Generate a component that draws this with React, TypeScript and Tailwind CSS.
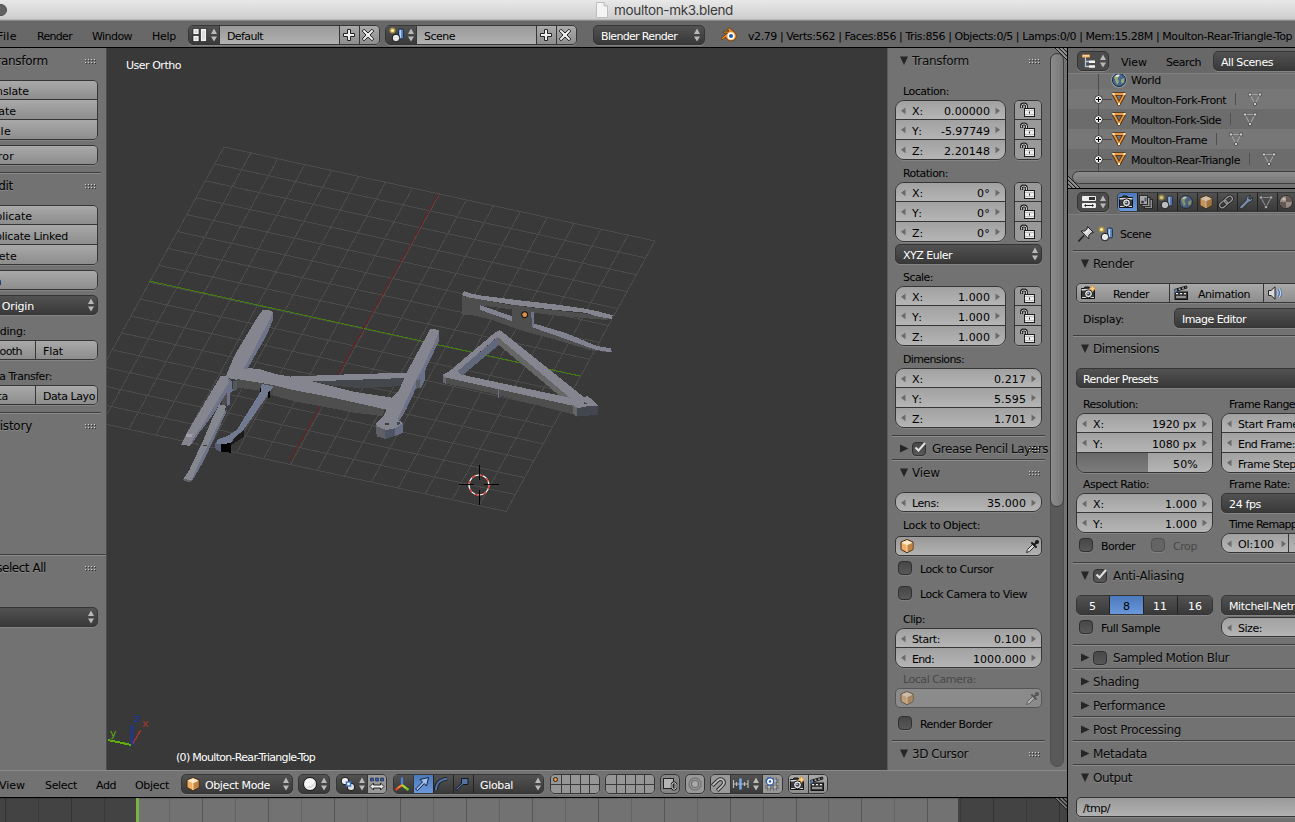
import React, { useLayoutEffect, useRef } from "react";

/* ---------- text ---------- */

// A label whose tracking is fitted so that it takes w pixels.
function T({ children, w, big, className = "" }: { children: string; w?: number; big?: boolean; className?: string }) {
  const ref = useRef<HTMLSpanElement>(null);
  useLayoutEffect(() => {
    const el = ref.current;
    if (!el || !w) return;
    el.style.letterSpacing = "0px";
    const natural = el.getBoundingClientRect().width;
    el.style.letterSpacing = (w - natural) / children.length + "px";
  }, [w, children]);
  return (
    <span ref={ref} className={"inline-block shrink-0 whitespace-pre leading-[14px] " + (big ? "" : "mt-[2px] ") + className}>
      {children}
    </span>
  );
}

/* ---------- shared looks ---------- */

const btn = "bg-linear-to-b from-[#a9a9a9] to-[#8d8d8d]";
const num = "bg-linear-to-b from-[#a1a1a1] to-[#b5b5b5]";
const menu = "bg-linear-to-b from-[#525252] to-[#393939] text-white";
const field = "bg-linear-to-b from-[#999] to-[#b2b2b2]";
const edge = "border border-[#363636] shadow-[0_1px_0_#848484]";

function Svg({ children, w = 16, h = 16, className = "" }: { children: React.ReactNode; w?: number; h?: number; className?: string }) {
  return (
    <svg width={w} height={h} viewBox={`0 0 ${w} ${h}`} className={"shrink-0 " + className}>
      {children}
    </svg>
  );
}

const UpDown = ({ className = "" }: { className?: string }) => (
  <Svg w={6} h={14} className={className}>
    <path d="M3 0.5 L6 6 H0Z M3 13.5 L6 8.5 H0Z" fill="#b9b9b9" />
  </Svg>
);
const Left = () => (
  <Svg w={5} h={8}>
    <path d="M0 3.8 L4.500 0.500 V7.200Z" fill="#6a6a6a" />
  </Svg>
);
const Right = () => (
  <Svg w={5} h={8}>
    <path d="M5 3.8 L0.500 0.500 V7.200Z" fill="#6a6a6a" />
  </Svg>
);

const Grip = ({ className = "" }: { className?: string }) => (
  <Svg w={12} h={6} className={className}>
    {[0, 3, 6, 9].map((x) => (
      <g key={x}>
        <path d={`M${x} 0h1v1h-1z M${x} 3h1v1h-1z`} fill="#d0d0d0" />
        <path d={`M${x + 1} 1h1v1h-1z M${x + 1} 4h1v1h-1z`} fill="#333" />
      </g>
    ))}
  </Svg>
);

const Sep = ({ className = "" }: { className?: string }) => (
  <div className={"h-[2px] shrink-0 border-b border-[#8b8b8b] bg-[#3e3e3e] " + className} />
);

function Check({ on, dim }: { on?: boolean; dim?: boolean }) {
  return (
    <div
      className={
        "relative h-[14px] w-[14px] shrink-0 rounded-[4px] border shadow-[0_1px_0_#808080] " +
        (dim ? "border-[#505050] bg-[#646464]" : "border-[#303030] bg-linear-to-b from-[#474747] to-[#585858]")
      }
    >
      {on && (
        <svg width="16" height="14" viewBox="0 0 16 14" className="absolute -top-[3px] -left-px">
          <path d="M3.5 7.5 L6.5 10.5 L13 3" fill="none" stroke="#e4e4e4" strokeWidth="2" />
        </svg>
      )}
    </div>
  );
}

function Head({ title, w, open = true, check, grip }: { title: string; w: number; open?: boolean; check?: "on" | "off"; grip?: string }) {
  return (
    <div className={"relative flex shrink-0 items-center text-[12px] text-[#080808] [text-shadow:0_1px_0_#8a8a8a] " + (open ? "h-6" : "h-[22px] pt-px")}>
      <Svg w={10} h={10} className="mr-[2px]">
        {open ? <path d="M0 0.5 H8 L4 9Z" fill="#262626" /> : <path d="M0 0.5 V8.5 L8.5 4.5Z" fill="#262626" />}
      </Svg>
      {check && (
        <div className="mr-[6px]">
          <Check on={check === "on"} />
        </div>
      )}
      <T big w={w}>{title}</T>
      {grip && <Grip className={"absolute top-[10px] " + grip} />}
    </div>
  );
}

function Num({ label, lw, value, vw, first, tight }: { label: string; lw: number; value?: string; vw?: number; first?: boolean; tight?: boolean }) {
  return (
    <div className={"flex flex-auto items-center pr-[5px] pl-[5px] " + num + (first ? " h-[18px] pt-px" : " h-5 border-t border-[#363636]")}>
      <Left />
      <T w={lw} className={"ml-[6px] " + (first ? "" : "pt-[2px]")}>{label}</T>
      <div className="flex-1" />
      {value && <T w={vw} className={(tight ? "mr-[5px] " : "mr-[6px] ") + (first ? "" : "pt-[2px]")}>{value}</T>}
      {value && <Right />}
    </div>
  );
}

const Label = ({ children, w, className = "" }: { children: string; w: number; className?: string }) => (
  <div className={"flex h-[18px] shrink-0 items-center " + className}>
    <T w={w}>{children}</T>
  </div>
);

/* ---------- icons ---------- */

const Plus = () => (
  <Svg w={14} h={14}>
    <path d="M5.5 1.5h3v4h4v3h-4v4h-3v-4h-4v-3h4z" fill="#eee" stroke="#222" />
  </Svg>
);
const Cross = () => (
  <Svg w={14} h={14}>
    <path d="M3 1.2 L7 5 L11 1.2 L12.8 3 L9 7 L12.8 11 L11 12.8 L7 9 L3 12.8 L1.2 11 L5 7 L1.2 3Z" fill="#eee" stroke="#222" />
  </Svg>
);
const SceneIcon = () => (
  <Svg>
    <rect x="9.5" y="2" width="5" height="10" rx="1.5" fill="#5583c4" stroke="#16233c" strokeWidth=".8" />
    <path d="M10.5 3h1.6v8h-1.6z" fill="#bcd6fa" />
    <circle cx="3.500" cy="3.5" r="3" fill="#ac9142" />
    <circle cx="3.500" cy="3.5" r="1.6" fill="#fff2a0" />
    <circle cx="7" cy="11" r="3.8" fill="#e9e9e9" stroke="#111" />
    <path d="M4 13a3.8 3.8 0 0 0 6.5-3.5 4 4 0 0 1-6.500 3.500z" fill="#888" />
  </Svg>
);
const Cube = ({ dim }: { dim?: boolean }) => (
  <Svg className={dim ? "opacity-55" : ""}>
    <path d="M8 1.500 L14 4 V11.500 L8 14.700 L2 11.500 V4Z" fill="#eeb068" stroke="#4a2a08" />
    <path d="M8 2.200 L13 4.300 L8 6.700 L3 4.300Z" fill="#fbe8cb" />
    <path d="M8 7 L13.400 4.700 V11.200 L8 14Z" fill="#c08340" />
    <path d="M8 6.500 V14 M3 4.500 L8 6.700 L13 4.500" fill="none" stroke="#fff1da" strokeWidth=".8" />
  </Svg>
);
const Globe = () => (
  <Svg>
    <circle cx="8" cy="8" r="6.500" fill="#47688f" stroke="#1b2532" />
    <path d="M3 5 Q6 1.500 9 3.500 L6.500 7 L8 9.500 L6 13 L4.500 9Z M10 7.500 L13.500 6 L13 10.500 L10.500 11.500Z" fill="#9aa878" />
    <path d="M4 4.500 Q6.500 1.500 9 3 L6 5Z" fill="#e6edf3" />
  </Svg>
);
const Eyedrop = ({ dim }: { dim?: boolean }) => (
  <Svg w={15} h={15} className={dim ? "opacity-45" : ""}>
    <path d="M1.500 13.500 L2.500 10.500 L8 5 L10 7 L4.500 12.500Z" fill="#d9d9d9" stroke="#222" strokeWidth=".9" />
    <path d="M7 4 L11 8 M9 6 L12.500 2.500" stroke="#1a1a1a" strokeWidth="2" strokeLinecap="round" />
    <circle cx="12" cy="3" r="2" fill="#1a1a1a" />
  </Svg>
);
const Unlock = () => (
  <Svg w={16} h={16}>
    <path d="M1.500 6 V3.500 Q1.500 2 3.500 2 H4.500 Q6.500 2 6.500 4 V7" fill="none" stroke="#1d1d1d" strokeWidth="2.800" />
    <path d="M1.500 5.500 V3.700 Q1.500 2.200 3.500 2.200 H4.500 Q6.500 2.200 6.500 4 V7" fill="none" stroke="#ccc" strokeWidth="1" />
    <rect x="4.500" y="6.500" width="10" height="8" fill="#ececec" stroke="#1d1d1d" />
    <path d="M5 8.500h9M5 12.500h9" stroke="#c0c0c0" />
    <path d="M9 9.500h1v2h-1z" fill="#222" />
  </Svg>
);
const MeshTri = () => (
  <Svg>
    <path d="M2.500 3 H13.500 L8 13Z" fill="none" stroke="#51300b" strokeWidth="3.600" strokeLinejoin="round" />
    <path d="M2.500 3 H13.500 L8 13Z" fill="none" stroke="#ee9a45" strokeWidth="1.800" />
    <path d="M1.500 2h2v2h-2z M12.500 2h2v2h-2z M7 12h2v2h-2z" fill="#fff0dc" />
  </Svg>
);
const MeshGrey = () => (
  <Svg>
    <path d="M3 3.500 H13 L8 13Z" fill="none" stroke="#a0a0a0" strokeWidth="1.100" />
    {[[3, 3.5], [13, 3.5], [8, 13]].map(([x, y]) => (
      <circle key={x} cx={x} cy={y} r="1.700" fill="#d0d0d0" stroke="#3c3c3c" strokeWidth=".8" />
    ))}
  </Svg>
);
const Camera = ({ spark }: { spark?: boolean }) => (
  <Svg>
    <path d="M1.500 3.500 H4 L5 2 H9 L10 3.500 H14.500 V13.500 H1.500Z" fill="#3b3b3b" stroke="#111" />
    <path d="M1.500 4h13v1.500h-13z M2 12h12v1h-12z" fill="#dadada" />
    <circle cx="8.500" cy="8.800" r="4" fill="#e2e2e2" stroke="#111" />
    <circle cx="8.500" cy="8.800" r="2" fill="#3c4654" />
    <circle cx="8" cy="8.200" r=".8" fill="#fff" />
    {spark && <path d="M12.500 0 L13.600 2.500 L16 3.500 L13.600 4.500 L12.500 7 L11.400 4.500 L9 3.500 L11.400 2.500Z" fill="#ffd48a" stroke="#d68b25" strokeWidth=".6" />}
  </Svg>
);
const Clapper = () => (
  <Svg>
    <path d="M1.500 4.500 L13.500 1 L14 3 L2 6.500Z" fill="#eee" stroke="#111" />
    <path d="M4 4 L5.500 5.300 M7.500 3 L9 4.200 M11 2 L12.500 3.200" stroke="#111" strokeWidth="1.500" />
    <rect x="2" y="7" width="12.500" height="7.500" fill="#3a3a3a" stroke="#111" />
    <path d="M3 8h2v1.200h-2z M7 8h2v1.200h-2z M11 8h2v1.200h-2z M3 11.500h10v1h-10z" fill="#e8e8e8" />
    <path d="M1.500 4.500h2v3h-2z" fill="#4e80bd" />
  </Svg>
);
const Speaker = () => (
  <Svg>
    <path d="M1.500 5.500 H4 L8 1.800 V14.200 L4 10.500 H1.500Z" fill="#d8d8d8" stroke="#222" />
    <path d="M10 5.500 Q12 8 10 10.500 M12 3.500 Q15.500 8 12 12.500" fill="none" stroke="#4d688f" strokeWidth="2.600" />
    <path d="M10 5.500 Q12 8 10 10.500 M12 3.500 Q15.500 8 12 12.500" fill="none" stroke="#b5cdf0" strokeWidth="1.400" />
  </Svg>
);
const Layers = () => (
  <Svg>
    <rect x="6.500" y="5.500" width="8" height="9" fill="#aaa" stroke="#222" />
    <rect x="4" y="3.500" width="8" height="9" fill="#bbb" stroke="#222" />
    <rect x="1.500" y="1.500" width="8" height="9" fill="#c8c8c8" stroke="#222" />
    <circle cx="4.500" cy="8" r="1.500" fill="#333" />
    <path d="M6.500 3.500h2v4h-2z" fill="#46648f" />
  </Svg>
);
const Chain = () => (
  <Svg>
    <g fill="none" transform="rotate(-40 8 8)">
      <rect x="0.500" y="5.500" width="8.500" height="5" rx="2.500" stroke="#191919" strokeWidth="3" />
      <rect x="7" y="5.500" width="8.500" height="5" rx="2.500" stroke="#191919" strokeWidth="3" />
      <rect x="0.500" y="5.500" width="8.500" height="5" rx="2.500" stroke="#b5b5b5" strokeWidth="1.300" />
      <rect x="7" y="5.500" width="8.500" height="5" rx="2.500" stroke="#b5b5b5" strokeWidth="1.300" />
    </g>
  </Svg>
);
const Wrench = () => (
  <Svg>
    <path d="M1.500 13 L8 6.500 Q7.500 3 11 1.500 L12.500 1.500 L10.500 4 L12 5.500 L14.500 3.500 Q15 7.500 10.500 8.200 L4 14.800 Q1.500 15.500 1.500 13Z" fill="#8fa9ca" stroke="#1d2530" />
  </Svg>
);
const Material = () => (
  <Svg>
    <circle cx="8" cy="8" r="6.500" fill="#b5a59a" stroke="#222" />
    <path d="M8 1.800 A6.200 6.200 0 0 1 14.200 8 H8Z M8 8 H1.800 A6.200 6.200 0 0 0 8 14.200Z" fill="#70615a" />
    <circle cx="6" cy="5" r="1.600" fill="#ece5e0" />
  </Svg>
);
const Pin = () => (
  <Svg>
    <path d="M0.500 15.500 L6 9.500" stroke="#222" strokeWidth="1.600" />
    <path d="M9.500 0.500 L15.500 6.500 L13 7 L10.800 9.500 L10.800 13 L3 5 L6.500 5 L9 3Z" fill="#d7d7d7" stroke="#222" />
    <path d="M7.500 7 L10.500 4.500" stroke="#fff" />
  </Svg>
);
const Blender = () => (
  <Svg w={18} h={16}>
    <path d="M1 11.500 L7.500 6 H3.500 V4.200 H9 L7.500 2 L9.500 1 L15.500 6 Q18 9.500 15 12.500 Q10.500 15.500 6.500 12 L5.500 10 L3 12.500Z" fill="#e98a23" stroke="#5e3509" strokeWidth=".7" />
    <circle cx="11" cy="9" r="3.700" fill="#fff" />
    <circle cx="11" cy="9" r="2" fill="#235a9c" />
  </Svg>
);
const LayoutIcon = () => (
  <Svg>
    <path d="M1 1.500h6v6h-6z M1 8.500h6v6h-6z M8.500 1.500h6v13h-6z" fill="#f2f2f2" stroke="#111" strokeWidth=".6" />
    <path d="M10 3.500h3v9h-3z M2.500 3h3v3h-3z M2.500 10h3v3h-3z" fill="#dcdcdc" />
  </Svg>
);
const TreeIcon = () => (
  <Svg>
    <path d="M4.500 4 V13.500 H8 M4.500 8.500 H8" fill="none" stroke="#b5c5d5" strokeWidth="1.300" />
    <path d="M1 1.500h8v3h-8z" fill="#e99848" />
    <path d="M2 2.200h6v1.300h-6z" fill="#ffe4c0" />
    <path d="M8 7.500h6v2.500h-6z M8 12.200h6v2.500h-6z" fill="#f2f2f2" />
  </Svg>
);
const PropIcon = () => (
  <Svg>
    <rect x="1" y="2" width="14" height="5" rx="1" fill="#eee" />
    <path d="M8 3h6v3h-6z" fill="#333" />
    <rect x="1" y="9" width="14" height="5" rx="1" fill="#eee" />
    <path d="M3 11.500 L5 10 V13Z M13 11.500 L11 10 V13Z M5 11h6v1h-6z" fill="#222" />
  </Svg>
);

/* ---------- top bars ---------- */

const TitleBar = () => (
  <div className="flex h-5 shrink-0 items-center border-b border-[#b8b8b8] bg-linear-to-b from-[#e8e8e8] to-[#cecece]">
    <div className="-ml-[6px] h-3 w-[13px] rounded-full border border-[#505050] bg-[#626262]" />
    <svg width="12" height="16" viewBox="0 0 12 16" className="ml-[589px]">
      <path d="M.5 .5 H8 L11.500 4 V15.500 H.5Z" fill="#f4f4f4" stroke="#bdbdbd" />
      <path d="M8 .5 V4 H11.500" fill="#ddd" stroke="#bdbdbd" />
    </svg>
    <T big w={119} className="mt-px ml-[6px] font-[Inter,sans-serif] text-[13.500px] text-[#3a3a3a]">moulton-mk3.blend</T>
  </div>
);

function IdBlock({ icon, name, w, className }: { icon: React.ReactNode; name: string; w: number; className: string }) {
  return (
    <div className={"flex h-5 shrink-0 overflow-hidden rounded-[5px] " + edge + " " + className}>
      <div className={"flex w-[30px] shrink-0 items-center gap-[3px] pl-[3px] " + menu}>
        {icon}
        <UpDown />
      </div>
      <div className={"flex w-[120px] shrink-0 items-center border-l border-[#363636] pt-px pl-[7px] " + field}>
        <T w={w}>{name}</T>
      </div>
      <div className={"flex w-[20px] shrink-0 items-center justify-center border-l border-[#363636] pr-[2px] " + btn}><Plus /></div>
      <div className={"flex flex-1 items-center justify-center border-l border-[#363636] pr-[3px] " + btn}><Cross /></div>
    </div>
  );
}

const InfoBar = () => (
  <div className="flex h-7 shrink-0 items-center border-t border-b border-t-[#8a8a8a] border-b-black bg-[#686868]">
    <div className="flex items-center pt-[4px]">
      <T w={20} className="-ml-[3px]">File</T>
      <T w={35} className="ml-[20px]">Render</T>
      <T w={40} className="ml-[20px]">Window</T>
      <T w={24} className="ml-[20px]">Help</T>
    </div>
    <div className="flex items-center pt-[2px]">
      <IdBlock icon={<LayoutIcon />} name="Default" w={36} className="ml-[12px] w-[192px]" />
      <IdBlock icon={<SceneIcon />} name="Scene" w={31} className="ml-[5px] w-[192px]" />
      <div className={"ml-[16px] flex h-5 w-[112px] items-center justify-between rounded-[5px] pr-[4px] pl-[7px] " + menu + " " + edge}>
        <T w={76} className="pt-px">Blender Render</T>
        <UpDown />
      </div>
      <div className="ml-[15px]"><Blender /></div>
      <T w={544} className="ml-[10px] pt-px">v2.79 | Verts:562 | Faces:856 | Tris:856 | Objects:0/5 | Lamps:0/0 | Mem:15.28M | Moulton-Rear-Triangle-Top</T>
    </div>
  </div>
);

/* ---------- tool shelf ---------- */

function ToolGroup({ items, className = "" }: { items: [string, number][]; className?: string }) {
  return (
    <div className={"mr-[8px] -ml-[28px] flex shrink-0 flex-col overflow-hidden rounded-[5px] " + edge + " " + className}>
      {items.map(([t, w], i) => (
        <div key={t} className={"flex items-center pl-[7px] " + btn + (i ? " h-5 border-t border-[#363636]" : " h-[18px] pt-px")}>
          <T w={w} className={i ? "pt-[2px]" : ""}>{t}</T>
        </div>
      ))}
    </div>
  );
}

function ToolPair({ a, aw, b, bw }: { a: string; aw: number; b: string; bw: number }) {
  return (
    <div className={"mr-[8px] -ml-[28px] flex h-5 shrink-0 overflow-hidden rounded-[5px] " + edge}>
      <div className={"flex w-[62px] items-center pt-px pl-[10px] " + btn}><T w={aw}>{a}</T></div>
      <div className={"flex flex-1 items-center border-l border-[#363636] pt-px pl-[7px] " + btn}><T w={bw}>{b}</T></div>
    </div>
  );
}

function ToolHead({ title, w, className = "-ml-[9px]" }: { title: string; w: number; className?: string }) {
  return (
    <div className="relative flex h-6 shrink-0 items-center text-[12px] [text-shadow:0_1px_0_#8a8a8a]">
      <T big w={w} className={className}>{title}</T>
      <Grip className="absolute top-[10px] left-[85px]" />
    </div>
  );
}

const ToolShelf = () => (
  <div className="flex w-[107px] shrink-0 flex-col overflow-hidden border-r border-[#4d4d4d] bg-[#727272]">
    <div className="mt-px"><ToolHead title="Transform" w={57} /></div>
    <ToolGroup className="mt-[7px] h-[60px]" items={[["Translate", 49], ["Rotate", 36], ["Scale", 31]]} />
    <ToolGroup className="mt-[5px] h-5" items={[["Mirror", 34]]} />
    <Sep className="mt-[7px] mr-[5px]" />
    <ToolHead title="Edit" w={22} />
    <ToolGroup className="mt-[7px] h-[60px]" items={[["Duplicate", 52], ["Duplicate Linked", 88], ["Delete", 37]]} />
    <ToolGroup className="mt-[5px] h-5" items={[["Join", 22]]} />
    <div className={"mt-[5px] mr-[8px] -ml-[28px] flex h-5 shrink-0 items-center justify-between rounded-[5px] pr-[3px] pl-[8px] " + menu + " " + edge}>
      <T w={53} className="pt-px">Set Origin</T>
      <UpDown />
    </div>
    <Label w={46} className="mt-[7px] -ml-[20px]">Shading:</Label>
    <ToolPair a="Smooth" aw={39} b="Flat" bw={20} />
    <Label w={71} className="mt-[7px] -ml-[19px]">Data Transfer:</Label>
    <ToolPair a="Data" aw={25} b="Data Layo" bw={52} />
    <Sep className="mt-[7px] mr-[5px]" />
    <ToolHead title="History" w={41} />
    <Sep className="mt-[116px]" />
    <ToolHead title="(De)select All" w={74} className="-ml-[28px]" />
    <div className={"mt-[27px] mr-[8px] -ml-[28px] flex h-5 shrink-0 items-center justify-end rounded-[5px] pr-[3px] " + menu + " " + edge}>
      <UpDown />
    </div>
  </div>
);

/* ---------- 3D viewport ---------- */

const steps = Array.from({ length: 17 }, (_, i) => i);

const FRAME: [string, string][] = [
  ["#44474b", "520,304 792,292 780,318 665,325 577,317"],
  ["#4e4e4e", "288,296 400,316 575,352 735,386 728,408 640,398 575,385 470,365 400,347 360,332 288,322"],
  ["#85858f", "312,262 360,268 410,283 448,289 490,297 640,335 757,353 778,372 740,389 575,352 460,330 400,315 285,296"],
  ["#85858f", "440,290 595,284 802,278 795,294 520,304 485,302"],
  ["#6d7389", "398,97 398,122 380,165 340,235 322,268 300,268 318,240 386,118"],
  ["#85858f", "368,90 396,92 398,99 388,120 345,205 312,265 290,300 256,292 283,228 305,190 350,115"],
  ["#6d7389", "896,152 896,185 855,272 828,325 800,385 780,420 760,420 790,365 828,290 880,185"],
  ["#6a7085", "838,284 855,275 855,300 845,322 834,326"],
  ["#5c5e66", "828,300 840,298 840,322 828,327"],
  ["#5f6066", "708,432 738,448 738,477 710,469"],
  ["#4f5464", "736,448 765,440 765,468 736,477"],
  ["#666c82", "764,440 788,428 788,458 764,469"],
  ["#85858f", "872,145 897,151 888,178 850,260 828,300 800,360 772,418 788,428 780,436 760,446 740,450 712,440 708,430 728,412 740,388 757,353 775,335 790,300 800,278 830,222"],
  ["#3e3e3e", "735,429 747,429 747,435 735,435"],
  ["#3e4452", "772,426 780,426 778,434 771,434"],
  ["#55585f", "280,302 291,305 290,330 279,333"],
  ["#4e4e4e", "246,350 262,335 264,372 246,378"],
  ["#6d7389", "264,290 276,305 278,334 269,340 269,375 262,378 262,335 215,410 175,462 152,496 156,480 245,335"],
  ["#85858f", "243,287 262,290 266,308 240,350 190,432 160,475 150,498 124,494 140,460 205,350"],
  ["#a0a0a6", "140,460 159,462 156,471 137,470"],
  ["#6d7389", "264,384 268,376 225,470 190,545 155,605 156,580 232,420"],
  ["#85878f", "238,373 257,377 256,390 232,440 196,510 165,575 154,604 130,598 148,570 190,480 215,420"],
  ["#5f6168", "130,597 155,601 152,607 132,603"],
  ["#3a3a3a", "176,492 202,497 202,499 176,494"],
  ["#474747", "400,322 397,345 384,348 312,458 310,452 350,390"],
  ["#1d1d1d", "312,450 312,470 273,496 270,486 290,468"],
  ["#000000", "243,492 273,489 273,518 243,516"],
  ["#596075", "225,490 243,492 243,516 227,509"],
  ["#727a92", "365,312 400,319 396,326 340,408 308,453 288,468 272,489 245,493 228,490 232,479 262,468 292,448 318,405 362,335"],
  ["#000000", "385,335 391,331 389,354 384,356"],
  ["#000000", "359,324 363,326 362,338 359,332"],
];

const REAR: [string, string][] = [
  ["#4e4e4e", "127,78 183,88 275,106 400,120 500,132 576,145 560,150 420,138 340,128 275,118 183,106 181,124"],
  ["#4e4e4e", "155,134 181,120 275,152 345,172 440,206 525,238 570,246 520,243 420,213 300,180 200,144"],
  ["#4e4e4e", "127,78 181,88 181,124 210,142 155,134 127,134"],
  ["#4e4e4e", "275,108 341,118 341,180 275,162"],
  ["#80838f", "181,106 275,138 275,153 181,120"],
  ["#80838f", "340,160 440,190 530,228 574,235 575,247 525,239 440,208 340,173"],
  ["#85858f", "125,75 133,64 150,70 185,77 300,91 420,105 495,116 530,123 578,136 576,147 530,139 495,128 400,119 275,104 150,83"],
  ["#6d7389", "333,127 341,127 343,168 337,170"],
  ["#666666", "233,200 233,222 440,395 470,395 480,388"],
  ["#62687c", "235,199 235,226 130,314 100,312 140,280"],
  ["#4e4e4e", "78,318 462,405 460,433 330,400 200,366 78,341"],
  ["#69696c", "69,315 79,318 79,342 70,338"],
  ["#85858f", "238,180 250,188 500,388 490,400 460,392 232,200"],
  ["#85858f", "238,180 243,199 232,201 112,304 125,314 462,386 490,396 462,408 75,322 69,314 90,302 222,190"],
  ["#85858f", "460,389 503,378 533,404 533,410 470,415 459,406"],
  ["#42464f", "470,413 498,412 500,407 533,407 533,434 470,440"],
  ["#666668", "459,405 471,413 471,440 459,431"],
  ["#3e4148", "492,397 501,399 500,402 492,401"],
  ["#6d7389", "233,356 237,357 237,384 233,383"],
];

const Viewport = () => (
  <div className="relative w-[780px] shrink-0 overflow-hidden bg-[#393939]">
    <svg width="780" height="722" viewBox="107 48 780 722" shapeRendering="crispEdges">
      <g stroke="#4b4b4b" strokeWidth="1">
        {steps.map((i) => {
          const t = i / 16;
          return (
            <g key={i}>
              <line x1={224 - 149 * t} y1={147 + 270.5 * t} x2={655 - 149 * t} y2={241 + 270.5 * t} />
              <line x1={224 + 431 * t} y1={147 + 94 * t} x2={75 + 431 * t} y2={417.5 + 94 * t} />
            </g>
          );
        })}
      </g>
      <line x1="149" y1="281" x2="580" y2="376" stroke="#40800f" />
      <line x1="438.500" y1="194" x2="289.500" y2="461" stroke="#6f1f1b" />
      <g transform="translate(140 280) scale(0.33333)">
        {FRAME.map(([c, p], i) => <polygon key={i} fill={c} points={p} />)}
      </g>
      <g transform="translate(420 270) scale(0.33333)">
        {REAR.map(([c, p], i) => <polygon key={i} fill={c} points={p} />)}
      </g>
      <circle cx="524.700" cy="314.700" r="3" fill="#d68f48" stroke="#000" shapeRendering="auto" />
      <g shapeRendering="auto" fill="none" strokeWidth="1.200">
        <circle cx="479" cy="485" r="10" stroke="#fff" />
        <circle cx="479" cy="485" r="10" stroke="#e5331f" strokeDasharray="3.927 3.927" />
      </g>
      <path d="M459 484.500h15 M484 484.500h15 M479.500 465v15 M479.500 490v15" stroke="#000" />
      <path d="M131.500 745 L108 740" stroke="#5fae0c" strokeWidth="2" />
      <path d="M132 745 L140.500 730.500" stroke="#a8332a" strokeWidth="1.500" />
      <path d="M132 745 V725" stroke="#1437b8" strokeWidth="2" />
    </svg>
    <span className="absolute top-[664px] left-[27px] text-[#1437b8]">z</span>
    <span className="absolute top-[669px] left-[35px] text-[#a8332a]">x</span>
    <span className="absolute top-[679px] left-[3px] text-[#5fae0c]">y</span>
    <T w={55} className="absolute top-[9px] left-[19px] text-white">User Ortho</T>
    <T w={139} className="absolute top-[701px] left-[69px] text-white">(0) Moulton-Rear-Triangle-Top</T>
  </div>
);

/* ---------- properties region of the 3D view ---------- */

type V = [string, string, number];

function Vec({ rows, lock }: { rows: V[]; lock?: boolean }) {
  return (
    <div className="ml-[7px] flex h-[60px] shrink-0">
      <div className={"flex flex-col overflow-hidden rounded-[9px] " + edge + (lock ? " w-[111px]" : " w-[147px]")}>
        {rows.map(([l, v, w], i) => (
          <Num key={l} tight label={l} lw={11} value={v} vw={w} first={i === 0} />
        ))}
      </div>
      {lock && (
        <div className={"ml-[8px] flex w-[28px] flex-col overflow-hidden rounded-[5px] " + edge}>
          {rows.map(([l], i) => (
            <div key={l} className={"flex items-center justify-center bg-[#999] " + (i ? "h-5 border-t border-[#363636]" : "h-[18px]")}>
              <Unlock />
            </div>
          ))}
        </div>
      )}
    </div>
  );
}

function CheckRow({ label, w, className = "" }: { label: string; w: number; className?: string }) {
  return (
    <div className={"ml-[10px] flex h-[18px] shrink-0 items-center gap-[8px] " + className}>
      <Check />
      <T w={w} className="pt-[2px]">{label}</T>
    </div>
  );
}

const Corner = ({ className, flip }: { className: string; flip?: boolean }) => (
  <svg width="12" height="12" viewBox="0 0 12 12" className={"absolute " + className}>
    <g transform={flip ? "rotate(180 6 6)" : undefined}>
      <path d="M0 0 L12 12 M4 0 L12 8 M8 0 L12 4" stroke="#1c1c1c" />
      <path d="M1.500 0 L12 10.500 M5.500 0 L12 6.500 M9.500 0 L12 2.500" stroke="#b5b5b5" strokeWidth=".9" />
    </g>
  </svg>
);

const SidePanel = () => (
  <div className="relative flex w-[180px] shrink-0 border-l border-[#5c5c5c] bg-[#727272]">
    <div className="flex w-[162px] flex-col">
      <div className="mt-px ml-[12px]"><Head title="Transform" w={57} grip="left-[129px]" /></div>
      <Label w={46} className="mt-[9px] ml-[15px]">Location:</Label>
      <Vec lock rows={[["X:", "0.00000", 46], ["Y:", "-5.97749", 49], ["Z:", "2.20148", 46]]} />
      <Label w={45} className="mt-1 ml-[15px]">Rotation:</Label>
      <Vec lock rows={[["X:", "0°", 13], ["Y:", "0°", 13], ["Z:", "0°", 13]]} />
      <div className={"mt-[2px] ml-[7px] flex h-5 w-[147px] shrink-0 items-center justify-between rounded-[5px] pr-[3px] pl-[7px] " + menu + " " + edge}>
        <T w={49} className="pt-px">XYZ Euler</T>
        <UpDown />
      </div>
      <Label w={30} className="mt-1 ml-[15px]">Scale:</Label>
      <Vec lock rows={[["X:", "1.000", 32], ["Y:", "1.000", 32], ["Z:", "1.000", 32]]} />
      <Label w={61} className="mt-1 ml-[15px]">Dimensions:</Label>
      <Vec rows={[["X:", "0.217", 32], ["Y:", "5.595", 32], ["Z:", "1.701", 32]]} />
      <Sep className="mt-[7px] ml-1 w-[153px]" />
      <div className="ml-[12px]"><Head open={false} check="on" title="Grease Pencil Layers" w={116} grip="left-[129px]" /></div>
      <Sep className="ml-1 w-[153px]" />
      <div className="ml-[12px]"><Head title="View" w={28} grip="left-[129px]" /></div>
      <div className={"mt-[7px] ml-[7px] flex h-5 w-[147px] shrink-0 overflow-hidden rounded-[9px] " + edge}>
        <Num tight label="Lens:" lw={27} value="35.000" vw={39} first />
      </div>
      <Label w={77} className="mt-1 ml-[15px]">Lock to Object:</Label>
      <div className={"mt-[2px] ml-[7px] flex h-5 w-[147px] shrink-0 items-center justify-between rounded-[5px] pr-[1px] pl-[3px] " + field + " " + edge}>
        <Cube />
        <Eyedrop />
      </div>
      <CheckRow label="Lock to Cursor" w={73} className="mt-[3px]" />
      <CheckRow label="Lock Camera to View" w={107} className="mt-[7px]" />
      <Label w={22} className="mt-[8px] ml-[15px]">Clip:</Label>
      <div className={"ml-[7px] flex h-10 w-[147px] shrink-0 flex-col overflow-hidden rounded-[9px] " + edge}>
        <Num tight label="Start:" lw={28} value="0.100" vw={32} first />
        <Num tight label="End:" lw={22} value="1000.000" vw={53} />
      </div>
      <Label w={73} className="mt-[2px] ml-[15px] text-[#484848]">Local Camera:</Label>
      <div className="ml-[7px] flex h-5 w-[147px] shrink-0 items-center justify-between rounded-[5px] border border-[#555] bg-[#8b8b8b] pr-[1px] pl-[3px]">
        <Cube dim />
        <Eyedrop dim />
      </div>
      <CheckRow label="Render Border" w={72} className="mt-[6px]" />
      <Sep className="mt-[8px] ml-1 w-[153px]" />
      <div className="ml-[12px]"><Head title="3D Cursor" w={56} grip="left-[129px]" /></div>
    </div>
    <div className="mt-[5px] mb-[3px] flex w-[14px] flex-col rounded-[7px] border border-[#505050] bg-[#595959]">
      <div className="-m-px h-[454px] rounded-[7px] border border-[#3d3d3d] bg-linear-to-r from-[#8d8d8d] to-[#777]" />
    </div>
    <Corner className="top-0 -right-0" />
  </div>
);

/* ---------- 3D view header ---------- */

const cell = "flex items-center justify-center ";
const icell = "flex items-center justify-center pr-[3px] ";

function LayerGrid({ active, className }: { active?: boolean; className: string }) {
  return (
    <div className={"grid h-5 w-[50px] shrink-0 grid-cols-5 grid-rows-2 overflow-hidden rounded-[5px] " + edge + " " + className}>
      {steps.slice(0, 10).map((i) => (
        <div key={i} className={(i % 5 ? "border-l " : "") + (i > 4 ? "border-t " : "") + "flex items-center justify-center border-[#3a3a3a] bg-[#969696]"}>
          {active && i === 0 && <div className="h-[5px] w-[5px] rounded-full border border-[#222] bg-[#f09a3c]" />}
        </div>
      ))}
    </div>
  );
}

const ViewHeader = () => (
  <div className="flex h-[27px] shrink-0 items-center border-t border-[#8a8a8a] bg-[#727272]">
    <div className="flex items-center pt-px">
      <T w={26} className="-ml-px">View</T>
      <T w={32} className="ml-[20px]">Select</T>
      <T w={20} className="ml-[19px]">Add</T>
      <T w={34} className="ml-[19px]">Object</T>
    </div>
    <div className={"ml-[12px] flex h-5 w-[112px] items-center rounded-[5px] pr-[3px] pl-[3px] " + menu + " " + edge}>
      <Cube />
      <T w={65} className="mr-auto ml-[4px] pt-px">Object Mode</T>
      <UpDown />
    </div>
    <div className={"ml-[5px] flex h-5 w-[32px] items-center justify-between rounded-[5px] pr-[2px] pl-[3px] " + menu + " " + edge}>
      <Svg><circle cx="8" cy="8" r="6.500" fill="#f6f6f6" stroke="#111" /><path d="M3.500 11 A6 6 0 0 0 13 5 Q11.500 10 3.500 11Z" fill="#dcdcdc" /></Svg>
      <UpDown />
    </div>
    <div className={"ml-[6px] flex h-5 w-[51px] overflow-hidden rounded-[5px] " + edge}>
      <div className={"flex w-[30px] items-center justify-between pr-[2px] pl-[3px] " + menu}>
        <Svg>
          <circle cx="5" cy="5" r="3.800" fill="#eee" stroke="#111" />
          <circle cx="11" cy="11" r="3.800" fill="#ddd" stroke="#111" />
          <rect x="6.500" y="6" width="4" height="4" fill="#fff" stroke="#3b74c4" strokeWidth="1.500" />
        </Svg>
        <UpDown />
      </div>
      <div className={cell + "flex-1 border-l border-[#363636] bg-[#999] pr-px"}>
        <Svg>
          <path d="M1.500 2h3v3h-3z M6.500 2h3v3h-3z M11.500 2h3v3h-3z" fill="#2f5fa8" stroke="#16233c" strokeWidth=".6" />
          <path d="M1 10.500 L4.500 7 V9 H11.500 V7 L15 10.500 L11.500 14 V12 H4.500 V14Z" fill="#eee" stroke="#222" />
        </Svg>
      </div>
    </div>
    <div className={"ml-[6px] flex h-5 w-[151px] overflow-hidden rounded-[5px] " + edge}>
      <div className={icell + "w-[19px] " + menu}>
        <Svg>
          <path d="M8 9 V1.500" stroke="#4b83dc" strokeWidth="2.200" />
          <path d="M8 9 L1.500 14" stroke="#d9402c" strokeWidth="2.400" />
          <path d="M8 9 L14.500 14" stroke="#7ac32a" strokeWidth="2.400" />
          <path d="M3.500 12 L8 9 L12 12" fill="none" stroke="#f2d23c" strokeWidth="1" />
        </Svg>
      </div>
      <div className={icell + "w-[20px] border-l border-[#363636] bg-linear-to-b from-[#4c79bb] to-[#6b98dc]"}>
        <Svg><path d="M1.500 13 L8.500 6 L6 3.500 L14.500 1.500 L12.500 10 L10.200 7.600 L3.500 14.500Z" fill="#a2c0ee" stroke="#12223c" /></Svg>
      </div>
      <div className={icell + "w-[20px] border-l border-[#222] " + menu}>
        <Svg><path d="M2 14 Q2 4 13.500 2.500" fill="none" stroke="#0f1724" strokeWidth="3.600" /><path d="M2 14 Q2 4 13.500 2.500" fill="none" stroke="#56729f" strokeWidth="2" /></Svg>
      </div>
      <div className={icell + "w-[20px] border-l border-[#222] " + menu}>
        <Svg><path d="M1.500 13 L7.500 7.500 V2.500 H14 V8.500 H9 L3 14.500Z" fill="#56729f" stroke="#0f1724" /></Svg>
      </div>
      <div className={"flex flex-1 items-center justify-between border-l border-[#222] pr-[2px] pl-[6px] " + menu}>
        <T w={33} className="pt-px">Global</T>
        <UpDown />
      </div>
    </div>
    <LayerGrid active className="ml-[6px]" />
    <LayerGrid className="ml-[5px]" />
    <div className={cell + "ml-[5px] h-5 w-[20px] rounded-[5px] bg-[#858585] " + edge}>
      <Svg><rect x="1.500" y="2.500" width="10" height="10" fill="#b5b5b5" stroke="#222" /><path d="M10 8 Q12 5 14 8 V12 Q12 15 10 12Z" fill="none" stroke="#222" strokeWidth="2.400" /><path d="M10 8 Q12 5 14 8 V12 Q12 15 10 12Z" fill="none" stroke="#ddd" /></Svg>
    </div>
    <div className={cell + "ml-[5px] h-5 w-[20px] rounded-[5px] bg-[#999] " + edge}>
      <Svg><circle cx="8" cy="8" r="6" fill="none" stroke="#777" strokeWidth="1.500" /><circle cx="8" cy="8" r="3.500" fill="#aaa" stroke="#6c6c6c" strokeWidth="1.200" /></Svg>
    </div>
    <div className={"ml-[5px] flex h-5 w-[73px] overflow-hidden rounded-[5px] " + edge}>
      <div className={icell + "w-[19px] bg-[#999]"}>
        <Svg>
          <g fill="none" transform="rotate(45 8 8)">
            <path d="M4.500 14 V7 Q4.500 2.500 8 2.500 Q11.500 2.500 11.500 7 V14" stroke="#2e2e2e" strokeWidth="3.800" />
            <path d="M4.500 13.500 V7 Q4.500 2.500 8 2.500 Q11.500 2.500 11.500 7 V13.500" stroke="#bdbdbd" strokeWidth="1.800" />
          </g>
        </Svg>
      </div>
      <div className={"flex w-[32px] items-center justify-between border-l border-[#363636] pr-[3px] pl-px " + menu}>
        <Svg w={18} h={16}>
          <path d="M1.500 4v8 M4.500 6v4 M12.500 6v4 M16 4v8 M1.500 8h15" stroke="#b9b9b9" strokeWidth="1.200" />
          <path d="M8.500 2.500v11" stroke="#7fb0f5" strokeWidth="2.400" />
        </Svg>
        <UpDown />
      </div>
      <div className={cell + "flex-1 border-l border-[#363636] bg-[#999] pr-px"}>
        <Svg>
          <path d="M5 1v14 M11 1v14 M1 5h14 M1 11h14" stroke="#222" strokeWidth="2.600" />
          <path d="M5 1v14 M11 1v14 M1 5h14 M1 11h14" stroke="#ddd" strokeWidth="1.200" />
          <circle cx="6" cy="5.500" r="3.600" fill="#fff" stroke="#2a5fae" strokeWidth="1.200" /><circle cx="6" cy="5.500" r="1.300" fill="#2a5fae" />
        </Svg>
      </div>
    </div>
    <div className={"ml-[5px] flex h-5 w-[40px] overflow-hidden rounded-[5px] " + edge}>
      <div className={icell + "w-[19px] " + btn}><Camera spark /></div>
      <div className={icell + "flex-1 border-l border-[#363636] " + btn}><Clapper /></div>
    </div>
  </div>
);

const Timeline = () => (
  <div className="relative flex h-[25px] shrink-0 border-t border-black">
    <svg width="1067" height="24" viewBox="0 0 1067 24" shapeRendering="crispEdges">
      <rect width="1067" height="24" fill="#434343" />
      <rect x="138" width="820" height="24" fill="#727272" />
      {Array.from({ length: 33 }, (_, i) => (
        <rect key={i} x={Math.floor(5.2 + 32.950 * i)} width="1" height="24" fill="#000" opacity={i % 2 ? 0.12 : 0.24} />
      ))}
      <rect width="1067" height="1" fill="#000" opacity="0.15" />
      <rect x="136" width="3" height="24" fill="#77b443" />
    </svg>
    <Corner className="top-0 right-0" />
  </div>
);

/* ---------- right column ---------- */

const Mini = ({ children }: { children: React.ReactNode }) => (
  <div className="flex h-5 w-[32px] shrink-0 items-center justify-between rounded-[5px] border border-[#333] bg-[#4b4b4b] pr-[2px] pl-[3px] shadow-[0_1px_0_#848484]">
    {children}
    <UpDown />
  </div>
);

const TREE: [string, number][] = [
  ["Moulton-Fork-Front", 95],
  ["Moulton-Fork-Side", 90],
  ["Moulton-Frame", 76],
  ["Moulton-Rear-Triangle", 109],
];

const Outliner = () => (
  <div className="relative flex h-[141px] shrink-0 flex-col border-b border-black bg-[#727272]">
    <div className="flex h-[26px] shrink-0 items-center border-b border-[#808080] bg-[#686868] pt-px pl-[9px]">
      <Mini><TreeIcon /></Mini>
      <T w={26} className="ml-[12px] pt-px">View</T>
      <T w={35} className="ml-[19px] pt-px">Search</T>
      <div className={"-mr-2 ml-[12px] flex h-5 flex-1 items-center rounded-l-[5px] pt-px pl-[7px] " + menu + " " + edge}>
        <T w={52}>All Scenes</T>
      </div>
    </div>
    <div className="relative flex h-[97px] shrink-0 flex-col overflow-hidden">
      <div className="absolute top-0 left-[30px] h-full w-px bg-[#4b4b4b]" />
      <div className="-mt-[5px] flex h-5 shrink-0 items-center pt-px pl-[43px]">
        <div className="relative rounded-full bg-[#8d97a8]"><Globe /></div>
        <T w={30} className="ml-[4px] pt-px">World</T>
      </div>
      {TREE.map(([t, w], i) => (
        <div key={t} className={"relative flex h-5 shrink-0 items-center pl-[26px] " + (i % 2 ? "bg-black/5" : "bg-white/4")}>
          <svg width="9" height="9" viewBox="0 0 9 9" className="relative">
            <circle cx="4.500" cy="4.500" r="4" fill="#f0f0f0" stroke="#333" />
            <path d="M2 4.500h5M4.500 2v5" stroke="#000" />
          </svg>
          <div className="h-px w-[9px] bg-[#4b4b4b]" />
          <div className="-ml-px"><MeshTri /></div>
          <T w={w} className="ml-[4px] pt-px">{t}</T>
          <div className="mr-[11px] ml-[9px] h-3 w-px bg-[#4f4f4f]" />
          <MeshGrey />
        </div>
      ))}
    </div>
    <div className="-mr-3 ml-1 h-[13px] rounded-full border border-[#3d3d3d] bg-linear-to-b from-[#8d8d8d] to-[#777]" />
    <Corner flip className="bottom-0 left-0" />
  </div>
);

const TABS = [<Camera />, <Layers />, <SceneIcon />, <Globe />, <Cube />, <Chain />, <Wrench />, <MeshGrey />, <Material />];

const Properties = () => (
  <div className="flex flex-1 flex-col overflow-hidden bg-[#727272]">
    <div className="flex h-[26px] shrink-0 items-center border-b border-[#808080] bg-[#686868] pl-[9px]">
      <Mini><PropIcon /></Mini>
      <div className={"-mr-2 ml-[8px] flex h-5 flex-1 overflow-hidden rounded-l-[5px] " + edge}>
        {TABS.map((t, i) => (
          <div key={i} className={icell + "shrink-0 " + (i ? "w-[20px] border-l border-[#222] " + menu + " *:opacity-75" : "w-[19px] bg-linear-to-b from-[#4c79bb] to-[#6b98dc]")}>
            {t}
          </div>
        ))}
      </div>
    </div>
    <div className="flex h-[35px] shrink-0 items-center pt-[2px] pl-[10px]">
      <Pin />
      <div className="ml-[4px]"><SceneIcon /></div>
      <T w={31} className="ml-[6px] pt-px">Scene</T>
    </div>
    <Sep className="ml-[5px]" />
    <div className="ml-[13px]"><Head title="Render" w={41} /></div>
    <div className={"mt-[7px] -mr-2 ml-[8px] flex h-5 shrink-0 overflow-hidden rounded-l-[5px] " + edge}>
      <div className={"flex w-[92px] items-center pl-[3px] " + btn}><Camera spark /><T w={36} className="ml-[17px] pt-px">Render</T></div>
      <div className={"flex w-[94px] items-center border-l border-[#363636] pl-[3px] " + btn}><Clapper /><T w={52} className="ml-[9px] pt-px">Animation</T></div>
      <div className={"flex flex-1 items-center border-l border-[#363636] pl-[3px] " + btn}><Speaker /></div>
    </div>
    <div className="mt-[5px] flex h-5 shrink-0 items-center pl-[15px]">
      <T w={41} className="pt-px">Display:</T>
      <div className={"-mr-2 ml-[50px] flex h-5 flex-1 items-center rounded-l-[5px] pt-px pl-[7px] " + menu + " " + edge}><T w={64}>Image Editor</T></div>
    </div>
    <Sep className="mt-[7px] ml-[5px]" />
    <div className="ml-[13px]"><Head title="Dimensions" w={66} /></div>
    <div className={"mt-[7px] -mr-2 ml-[8px] flex h-5 shrink-0 items-center rounded-l-[5px] pt-px pl-[6px] " + menu + " " + edge}><T w={75}>Render Presets</T></div>
    <div className="mt-[7px] flex h-[160px] shrink-0 pl-[8px]">
      <div className="flex w-[137px] shrink-0 flex-col">
        <Label w={55} className="ml-[7px]">Resolution:</Label>
        <div className={"flex h-[60px] shrink-0 flex-col overflow-hidden rounded-[9px] " + edge}>
          <Num label="X:" lw={11} value="1920 px" vw={44} first />
          <Num label="Y:" lw={11} value="1080 px" vw={44} />
          <div className="flex h-5 border-t border-[#363636]">
            <div className="w-[71px] bg-linear-to-b from-[#686868] to-[#7c7c7c]" />
            <div className={"flex flex-1 items-center justify-end pr-[14px] " + num}><T w={25} className="pt-[2px]">50%</T></div>
          </div>
        </div>
        <Label w={66} className="mt-[2px] ml-[7px]">Aspect Ratio:</Label>
        <div className={"flex h-10 shrink-0 flex-col overflow-hidden rounded-[9px] " + edge}>
          <Num tight label="X:" lw={11} value="1.000" vw={32} first />
          <Num tight label="Y:" lw={11} value="1.000" vw={32} />
        </div>
        <div className="mt-[3px] ml-[3px] flex h-[18px] shrink-0 items-center">
          <Check />
          <T w={34} className="ml-[8px] pt-px">Border</T>
          <div className="ml-[16px]"><Check dim /></div>
          <T w={24} className="ml-[8px] pt-px text-[#484848]">Crop</T>
        </div>
      </div>
      <div className="-mr-10 ml-[8px] flex w-[120px] shrink-0 flex-col">
        <Label w={69} className="ml-[8px]">Frame Range:</Label>
        <div className={"flex h-[60px] shrink-0 flex-col overflow-hidden rounded-[9px] " + edge}>
          <Num label="Start Frame:" lw={64} first />
          <Num label="End Frame:" lw={57} />
          <Num label="Frame Step:" lw={61} />
        </div>
        <Label w={61} className="mt-[2px] ml-[8px]">Frame Rate:</Label>
        <div className={"flex h-5 shrink-0 items-center rounded-[5px] pt-px pl-[7px] " + menu + " " + edge}><T w={32}>24 fps</T></div>
        <Label w={86} className="mt-[2px] ml-[8px]">Time Remapping:</Label>
        <div className={"flex h-5 shrink-0 overflow-hidden rounded-[9px] " + edge}>
          <div className="flex w-[66px]"><Num label="Ol:100" lw={36} value=" " vw={1} first /></div>
          <div className="flex flex-1 border-l border-[#363636]"><Num label="Ne" lw={12} first /></div>
        </div>
      </div>
    </div>
    <Sep className="mt-[7px] ml-[5px]" />
    <div className="ml-[13px]"><Head check="on" title="Anti-Aliasing" w={71} /></div>
    <div className="mt-[7px] flex h-[42px] shrink-0 pl-[8px]">
      <div className="w-[137px] shrink-0">
        <div className={"flex h-5 overflow-hidden rounded-[5px] " + edge}>
          <div className={cell + "w-[32px] pt-[3px] pr-px " + menu}>5</div>
          <div className={cell + "w-[34px] border-l border-[#222] bg-linear-to-b from-[#4c79bb] to-[#6b98dc] pt-[3px]"}>8</div>
          <div className={cell + "w-[34px] border-l border-[#222] pt-[3px] pr-px " + menu}>11</div>
          <div className={cell + "flex-1 border-l border-[#222] pt-[3px] " + menu}>16</div>
        </div>
        <div className="mt-[3px] ml-[3px] flex h-[18px] items-center gap-[8px]"><Check /><T w={59} className="pt-px">Full Sample</T></div>
      </div>
      <div className="-mr-10 ml-[8px] flex w-[120px] shrink-0 flex-col gap-[2px]">
        <div className={"flex h-5 shrink-0 items-center rounded-[5px] pt-px pl-[7px] " + menu + " " + edge}><T w={90}>Mitchell-Netravali</T></div>
        <div className={"flex h-5 overflow-hidden rounded-[9px] " + edge}><Num label="Size:" lw={24} first /></div>
      </div>
    </div>
    <Sep className="mt-[7px] ml-[5px]" />
    <div className="ml-[13px]"><Head open={false} check="off" title="Sampled Motion Blur" w={116} /></div>
    <Sep className="ml-[5px]" />
    <div className="ml-[13px]"><Head open={false} title="Shading" w={46} /></div>
    <Sep className="ml-[5px]" />
    <div className="ml-[13px]"><Head open={false} title="Performance" w={72} /></div>
    <Sep className="ml-[5px]" />
    <div className="ml-[13px]"><Head open={false} title="Post Processing" w={88} /></div>
    <Sep className="ml-[5px]" />
    <div className="ml-[13px]"><Head open={false} title="Metadata" w={54} /></div>
    <Sep className="ml-[5px]" />
    <div className="ml-[13px]"><Head title="Output" w={39} /></div>
    <div className={"mt-[7px] -mr-2 ml-[8px] flex h-5 shrink-0 items-center rounded-l-[5px] pt-px pl-[6px] " + field + " " + edge}><T w={27}>/tmp/</T></div>
  </div>
);

export default function App() {
  return (
    <div className="flex h-[822px] w-[1295px] flex-col overflow-hidden bg-[#727272] font-['DejaVu_Sans',sans-serif] text-[11px] leading-[14px] text-black">
      <TitleBar />
      <InfoBar />
      <div className="flex min-h-0 flex-1">
        <div className="flex w-[1067px] shrink-0 flex-col">
          <div className="flex h-[722px] shrink-0">
            <ToolShelf />
            <Viewport />
            <SidePanel />
          </div>
          <ViewHeader />
          <Timeline />
        </div>
        <div className="flex w-[228px] shrink-0 flex-col border-l border-black">
          <Outliner />
          <Properties />
        </div>
      </div>
    </div>
  );
}
